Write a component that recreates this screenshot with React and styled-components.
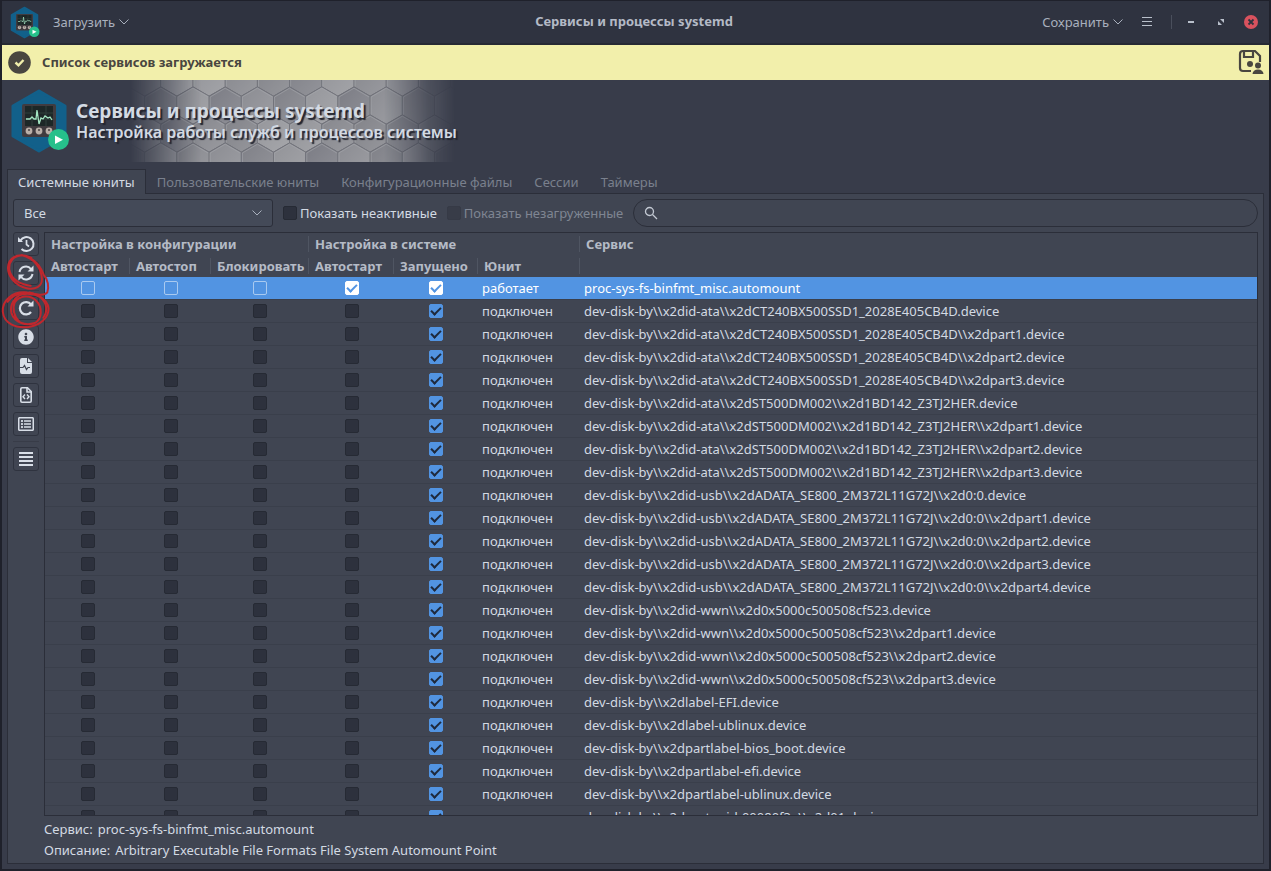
import React from 'react'
import styled, { createGlobalStyle } from 'styled-components'
import { FaInfoCircle, FaRegListAlt } from 'react-icons/fa'

const rows = [
  'dev-disk-by\\\\x2did-ata\\\\x2dCT240BX500SSD1_2028E405CB4D.device',
  'dev-disk-by\\\\x2did-ata\\\\x2dCT240BX500SSD1_2028E405CB4D\\\\x2dpart1.device',
  'dev-disk-by\\\\x2did-ata\\\\x2dCT240BX500SSD1_2028E405CB4D\\\\x2dpart2.device',
  'dev-disk-by\\\\x2did-ata\\\\x2dCT240BX500SSD1_2028E405CB4D\\\\x2dpart3.device',
  'dev-disk-by\\\\x2did-ata\\\\x2dST500DM002\\\\x2d1BD142_Z3TJ2HER.device',
  'dev-disk-by\\\\x2did-ata\\\\x2dST500DM002\\\\x2d1BD142_Z3TJ2HER\\\\x2dpart1.device',
  'dev-disk-by\\\\x2did-ata\\\\x2dST500DM002\\\\x2d1BD142_Z3TJ2HER\\\\x2dpart2.device',
  'dev-disk-by\\\\x2did-ata\\\\x2dST500DM002\\\\x2d1BD142_Z3TJ2HER\\\\x2dpart3.device',
  'dev-disk-by\\\\x2did-usb\\\\x2dADATA_SE800_2M372L11G72J\\\\x2d0:0.device',
  'dev-disk-by\\\\x2did-usb\\\\x2dADATA_SE800_2M372L11G72J\\\\x2d0:0\\\\x2dpart1.device',
  'dev-disk-by\\\\x2did-usb\\\\x2dADATA_SE800_2M372L11G72J\\\\x2d0:0\\\\x2dpart2.device',
  'dev-disk-by\\\\x2did-usb\\\\x2dADATA_SE800_2M372L11G72J\\\\x2d0:0\\\\x2dpart3.device',
  'dev-disk-by\\\\x2did-usb\\\\x2dADATA_SE800_2M372L11G72J\\\\x2d0:0\\\\x2dpart4.device',
  'dev-disk-by\\\\x2did-wwn\\\\x2d0x5000c500508cf523.device',
  'dev-disk-by\\\\x2did-wwn\\\\x2d0x5000c500508cf523\\\\x2dpart1.device',
  'dev-disk-by\\\\x2did-wwn\\\\x2d0x5000c500508cf523\\\\x2dpart2.device',
  'dev-disk-by\\\\x2did-wwn\\\\x2d0x5000c500508cf523\\\\x2dpart3.device',
  'dev-disk-by\\\\x2dlabel-EFI.device',
  'dev-disk-by\\\\x2dlabel-ublinux.device',
  'dev-disk-by\\\\x2dpartlabel-bios_boot.device',
  'dev-disk-by\\\\x2dpartlabel-efi.device',
  'dev-disk-by\\\\x2dpartlabel-ublinux.device',
  'dev-disk-by\\\\x2dpartuuid-00080f3a\\\\x2d01.device',
].map((name) => ({ name, state: 'подключен', checks: [false, false, false, false, true] }))

const services = [
  { name: 'proc-sys-fs-binfmt_misc.automount', state: 'работает', checks: [false, false, false, true, true], selected: true },
  ...rows,
]

const columns = ['Автостарт', 'Автостоп', 'Блокировать', 'Автостарт', 'Запущено']
const tabs = ['Системные юниты', 'Пользовательские юниты', 'Конфигурационные файлы', 'Сессии', 'Таймеры']

function Logo({ width, height }) {
  return (
    <svg width={width} height={height} viewBox="0 0 60 66" aria-hidden="true">
      <path d="M29 3 55 18V48L29 63 3 48V18Z" fill="#12608a" stroke="#12608a" strokeWidth="3" strokeLinejoin="round" />
      <rect x="12" y="16" width="34" height="33" rx="2" fill="#403b3f" />
      <rect x="15" y="18" width="28" height="20" fill="#1d2727" />
      <path d="M15 25H43M15 31H43M22 18V38M36 18V38" stroke="#30403c" strokeWidth="1" />
      <path d="M16 31H20L22 29 24 31H26L27 22 29 36 31 30 33 31 35 28 38 30 40 29 42 32" fill="none" stroke="#a5e8c4" strokeWidth="1.3" />
      <circle cx="19" cy="43" r="3.4" fill="#b9afa8" />
      <circle cx="29" cy="43" r="3.4" fill="#b9afa8" />
      <circle cx="39" cy="43" r="3.4" fill="#b9afa8" />
      <path d="M18 42h2M28 42h2M38 42h2" stroke="#4c4545" strokeWidth="1.4" />
      <circle cx="48.500" cy="51.500" r="10.500" fill="#26c08b" />
      <path d="M45 47.500 53 51.700 45 56Z" fill="#fff" />
    </svg>
  )
}

function Chevron() {
  return (
    <svg width="10" height="6" viewBox="0 0 10 6" fill="none" stroke="currentColor" aria-hidden="true">
      <path d="M.5.500 5 5 9.500.500" />
    </svg>
  )
}

function hexPoints(cx, cy) {
  return [[0, -18.6], [16.1, -9.3], [16.1, 9.3], [0, 18.6], [-16.1, 9.3], [-16.1, -9.3]]
    .map(([x, y]) => `${cx + x},${cy + y}`)
    .join(' ')
}

function Honeycomb() {
  const shades = ['#86878d', '#929398', '#7f8087', '#8b8c92', '#7b7c84', '#95969b', '#828389']
  const cells = []
  for (let r = 0; r < 4; r++) {
    for (let c = 0; c < 12; c++) {
      const cx = (r % 2 ? -1.4 : -17.5) + c * 32.2
      cells.push([cx, -2.5 + r * 28, shades[(r * 3 + c * 5 + (c % 3)) % 7]])
    }
  }
  return (
    <HoneycombSvg width="325" height="82" viewBox="0 0 325 82" aria-hidden="true">
      <defs>
        <linearGradient id="gloss" x1="0" y1="0" x2="1" y2="1">
          <stop offset="0" stopColor="#fff" stopOpacity="0" />
          <stop offset="1" stopColor="#fff" stopOpacity="0.16" />
        </linearGradient>
      </defs>
      {cells.map(([x, y, fill]) => (
        <g key={`${x}-${y}`}>
          <polygon points={hexPoints(x, y)} fill={fill} stroke="#6f7077" strokeWidth="0.8" />
          <polygon points={hexPoints(x, y)} fill="url(#gloss)" />
          <path d={`M${x - 15} ${y + 9}V${y - 8.5}L${x} ${y - 17.3}L${x + 15} ${y - 8.5}`} fill="none" stroke="#a5a6ab" strokeWidth="0.6" />
        </g>
      ))}
    </HoneycombSvg>
  )
}

function DoneIcon() {
  return (
    <svg width="23" height="23" viewBox="0 0 23 23" aria-hidden="true">
      <circle cx="11.500" cy="11.500" r="11.300" fill="#494640" />
      <path d="M7.500 11.500 10.500 14.300 15.500 9" fill="none" stroke="#f2efab" strokeWidth="2.400" />
    </svg>
  )
}

function SaveIcon() {
  return (
    <svg width="26" height="26" viewBox="0 0 26 26" fill="none" stroke="#494640" strokeWidth="2.200" aria-hidden="true">
      <path d="M13 22H5Q2 22 2 19V5Q2 2 5 2H17L22 7V13" />
      <path d="M6 2V8H15V2" />
      <circle cx="12" cy="15" r="3" fill="#494640" stroke="none" />
      <circle cx="20" cy="16.500" r="3" fill="#494640" stroke="none" />
      <path d="M14.500 25Q15 20.500 20 20.500T25.500 25Z" fill="#494640" stroke="none" />
    </svg>
  )
}

const HistoryIcon = () => (
  <svg width="18" height="18" viewBox="0 0 18 18" fill="none" stroke="currentColor" strokeWidth="2">
    <path d="M3.500 5.500A7 7 0 1 1 4.500 14" />
    <path d="M1 2V7H6Z" fill="currentColor" stroke="none" />
    <path d="M9.500 5V9.500L12 11.500" strokeWidth="1.700" />
  </svg>
)

const SyncIcon = () => (
  <svg width="18" height="18" viewBox="0 0 18 18" fill="none" stroke="currentColor" strokeWidth="2">
    <path d="M2.500 8A6.500 6.500 0 0 1 14 5" />
    <path d="M15.500 10A6.500 6.500 0 0 1 4 13" />
    <path d="M16.500 1.500V7.500H10.500ZM1.500 16.500V10.500H7.500Z" fill="currentColor" stroke="none" />
  </svg>
)

const RedoIcon = () => (
  <svg width="18" height="18" viewBox="0 0 18 18" fill="none" stroke="currentColor" strokeWidth="2.200">
    <path d="M14 5.500A6.200 6.200 0 1 0 14 13" />
    <path d="M16.500 1.500V7.500H10.500Z" fill="currentColor" stroke="none" />
  </svg>
)

const JournalIcon = () => (
  <svg width="18" height="18" viewBox="0 0 18 18">
    <path d="M3 3Q3 1 5 1H10V6H15V15Q15 17 13 17H5Q3 17 3 15ZM11 1 15 5H11Z" fill="currentColor" />
    <path d="M3 10.500H6L7.500 8.500 9.500 12.500 11 10.500H13" fill="none" stroke="#404552" strokeWidth="1.200" />
  </svg>
)

const CodeIcon = () => (
  <svg width="18" height="18" viewBox="0 0 18 18" fill="none" stroke="currentColor" strokeWidth="1.600">
    <path d="M3.800 3Q3.800 1.800 5 1.800H10.500L14.200 5.500V15Q14.200 16.200 13 16.200H5Q3.800 16.200 3.800 15Z" />
    <path d="M10 2V6H14" />
    <path d="M8 8.500 6 10.700 8 13M10 8.500 12 10.700 10 13" strokeWidth="1.400" />
  </svg>
)

const LinesIcon = () => (
  <svg width="18" height="18" viewBox="0 0 18 18" stroke="currentColor" strokeWidth="2">
    <path d="M2 3H16M2 7H16M2 11H16M2 15H16" />
  </svg>
)

const MenuIcon = () => (
  <svg width="12" height="12" viewBox="0 0 12 12" stroke="currentColor">
    <path d="M1 1.500H11M1 5.500H11M1 9.500H11" />
  </svg>
)

// freehand marks over the two refresh buttons
function Marks() {
  return (
    <MarksSvg width="60" height="83" viewBox="0 60 180 250" fill="none" stroke="#c1272d" strokeWidth="6" strokeLinecap="round" aria-hidden="true">
      <path d="M94 84C66 68 32 76 25 104C18 136 44 166 80 175C106 181 126 170 126 148C125 112 100 84 66 76C42 78 24 92 28 122C36 150 62 164 92 168" />
      <path d="M84 82C114 94 124 116 132 136C144 148 148 172 142 188C134 198 108 196 88 188" />
      <path d="M80 188C36 184 6 212 8 246C12 282 46 296 86 292C122 286 146 264 146 236C142 206 108 188 68 193C44 200 28 224 34 250C44 278 76 290 104 280C128 268 128 232 108 212C90 194 58 196 44 218C36 236 42 262 58 276" />
      <path d="M22 216C44 186 92 180 122 202C144 222 142 248 130 264" />
    </MarksSvg>
  )
}

const tools = [
  { label: 'История', icon: <HistoryIcon /> },
  { label: 'Обновить', icon: <SyncIcon /> },
  { separator: true },
  { label: 'Перезапустить', icon: <RedoIcon /> },
  { label: 'Сведения', icon: <FaInfoCircle size={16} /> },
  { label: 'Журнал', icon: <JournalIcon /> },
  { label: 'Файл', icon: <CodeIcon /> },
  { label: 'Список', icon: <FaRegListAlt size={16} /> },
  { separator: true },
  { label: 'Строки', icon: <LinesIcon /> },
]

export default function App() {
  return (
    <>
      <GlobalStyle />
      <Window>
        <TitleBar>
          <TitleGroup>
            <Logo width={30} height={33} />
            <MenuButton>Загрузить<Chevron /></MenuButton>
          </TitleGroup>
          <WindowTitle>Сервисы и процессы systemd</WindowTitle>
          <TitleGroup $end>
            <MenuButton>Сохранить<Chevron /></MenuButton>
            <IconButton aria-label="Меню"><MenuIcon /></IconButton>
            <Divider />
            <WindowButtons>
              <IconButton aria-label="Свернуть">
                <svg width="14" height="14" viewBox="0 0 14 14"><path d="M4 7H10" stroke="currentColor" strokeWidth="2" /></svg>
              </IconButton>
              <IconButton aria-label="Восстановить">
                <svg width="14" height="14" viewBox="0 0 14 14" fill="currentColor"><path d="M6 4H10V8ZM4 6V10H8Z" /></svg>
              </IconButton>
              <IconButton aria-label="Закрыть">
                <svg width="14" height="14" viewBox="0 0 14 14">
                  <circle cx="7" cy="7" r="7" fill="#d9525e" />
                  <path d="M4.500 4.500 9.500 9.500M9.500 4.500 4.500 9.500" stroke="#2f343f" strokeWidth="1.800" />
                </svg>
              </IconButton>
            </WindowButtons>
          </TitleGroup>
        </TitleBar>

        <Notice>
          <DoneIcon />
          <span>Список сервисов загружается</span>
          <NoticeButton aria-label="Сохранить для пользователя"><SaveIcon /></NoticeButton>
        </Notice>

        <Banner>
          <Honeycomb />
          <BannerContent>
            <Logo width={60} height={66} />
            <div>
              <h1>Сервисы и процессы systemd</h1>
              <h2>Настройка работы служб и процессов системы</h2>
            </div>
          </BannerContent>
        </Banner>

        <Tabs role="tablist">
          {tabs.map((tab, i) => (
            <Tab key={tab} role="tab" aria-selected={i === 0} $active={i === 0}>{tab}</Tab>
          ))}
        </Tabs>

        <Panel>
          <Filters>
            <SelectBox>
              <select aria-label="Тип юнита" defaultValue="all">
                <option value="all">Все</option>
              </select>
              <Chevron />
            </SelectBox>
            <CheckLabel>
              <Check type="checkbox" />Показать неактивные
            </CheckLabel>
            <CheckLabel $disabled>
              <Check type="checkbox" disabled />Показать незагруженные
            </CheckLabel>
            <Search>
              <svg width="14" height="14" viewBox="0 0 14 14" fill="none" stroke="currentColor" strokeWidth="1.300">
                <circle cx="5.500" cy="5.500" r="4" />
                <path d="M8.500 8.500 13 13" />
              </svg>
              <input type="search" aria-label="Поиск" />
            </Search>
          </Filters>

          <Content>
            <Toolbar>
              {tools.map((tool, i) => (tool.separator
                ? <Separator key={i} />
                : <ToolButton key={i} aria-label={tool.label}>{tool.icon}</ToolButton>
              ))}
              <Marks />
            </Toolbar>
            <TableBox>
              <Table>
                <colgroup>
                  <Col $width={85} />
                  <Col $width={81} />
                  <Col $width={98} />
                  <Col $width={85} />
                  <Col $width={84} />
                  <Col $width={102} />
                  <col />
                </colgroup>
                <thead>
                  <tr>
                    <HeadCell colSpan={3} $line>Настройка в конфигурации</HeadCell>
                    <HeadCell colSpan={3} $line>Настройка в системе</HeadCell>
                    <HeadCell>Сервис</HeadCell>
                  </tr>
                  <tr>
                    {columns.map((name, i) => <HeadCell key={i} $line>{name}</HeadCell>)}
                    <HeadCell $line>Юнит</HeadCell>
                    <HeadCell as="td" />
                  </tr>
                </thead>
                <tbody>
                  {services.map((service) => (
                    <Row key={service.name} $selected={service.selected}>
                      {service.checks.map((on, i) => (
                        <Cell key={i} $center>
                          <Check
                            type="checkbox"
                            defaultChecked={on}
                            $selected={service.selected}
                            aria-label={`${columns[i]} ${service.name}`}
                          />
                        </Cell>
                      ))}
                      <Cell>{service.state}</Cell>
                      <Cell>{service.name}</Cell>
                    </Row>
                  ))}
                </tbody>
              </Table>
            </TableBox>
          </Content>

          <Details>
            <dt>Сервис:</dt>
            <dd>proc-sys-fs-binfmt_misc.automount</dd>
          </Details>
          <Details>
            <dt>Описание:</dt>
            <dd>Arbitrary Executable File Formats File System Automount Point</dd>
          </Details>
        </Panel>
      </Window>
    </>
  )
}

const GlobalStyle = createGlobalStyle`
  * {
    box-sizing: border-box;
  }
  body {
    margin: 0;
    background: #1b1c24;
    color: #d3dae3;
    font-family: "Noto Sans", sans-serif;
    font-size: 13px;
  }
  button, input, select {
    font: inherit;
    color: inherit;
  }
  button {
    padding: 0;
    border: 0;
    background: none;
  }
  svg {
    flex: none;
  }
`

const Window = styled.div`
  display: flex;
  flex-direction: column;
  height: 100vh;
  background: #383c4a;
  border: 2px solid #1f212b;
  border-top-width: 1px;
`

const TitleBar = styled.header`
  display: grid;
  grid-template-columns: 1fr auto 1fr;
  align-items: center;
  flex: none;
  height: 44px;
  padding: 0 11px 0 8px;
  background: #2f3340;
  border-bottom: 2px solid #272a34;
  color: #a9b0bd;
`

const TitleGroup = styled.div`
  display: flex;
  align-items: center;
  justify-content: ${({ $end }) => ($end ? 'flex-end' : 'flex-start')};
  gap: ${({ $end }) => ($end ? '18px' : '13px')};
`

const WindowButtons = styled.div`
  display: flex;
  gap: 16px;
  margin-left: -6px;
`

const WindowTitle = styled.strong`
  padding-bottom: 2px;
  color: #b4bac6;
`

const MenuButton = styled.button`
  display: flex;
  align-items: center;
  gap: 4px;
`

const IconButton = styled.button`
  display: flex;
  color: #b9c0cb;
`

const Divider = styled.span`
  width: 1px;
  height: 14px;
  background: #4a4f5c;
`

const Notice = styled.div`
  display: flex;
  align-items: center;
  flex: none;
  gap: 11px;
  height: 35px;
  padding: 0 5px 1px 6px;
  background: #f2efab;
  color: #494640;
  font-weight: 700;
`

const NoticeButton = styled.button`
  display: flex;
  margin-left: auto;
`

const Banner = styled.div`
  display: grid;
  flex: none;
  height: 82px;
  > * {
    grid-area: 1 / 1;
  }
`

const HoneycombSvg = styled.svg`
  margin-left: 128px;
  mask-image: linear-gradient(90deg, transparent, #000 22%, #000 78%, rgba(0, 0, 0, 0.25) 92%, transparent);
`

const BannerContent = styled.div`
  display: flex;
  align-items: center;
  gap: 6px;
  padding-left: 8px;
  z-index: 1;
  text-shadow: 2px 2px 1px #23252f;
  h1, h2 {
    margin: 0;
    font-weight: 700;
    white-space: nowrap;
  }
  h1 {
    font-size: 19px;
    line-height: 22px;
  }
  h2 {
    font-size: 16px;
    font-weight: 600;
    line-height: 20px;
  }
`

const Tabs = styled.div`
  display: flex;
  flex: none;
  margin: 7px 5px 0;
`

const Tab = styled.button`
  height: 25px;
  margin-bottom: -1px;
  padding: 0 10px;
  border: 1px solid transparent;
  border-bottom: 0;
  color: #7a808d;
  ${({ $active }) => $active && `
    position: relative;
    background: #404552;
    border-color: #2b2e39;
    color: #d3dae3;
  `}
`

const Panel = styled.main`
  display: flex;
  flex-direction: column;
  flex: 1;
  min-height: 0;
  margin: 0 5px 5px;
  padding: 5px 5px 2px;
  background: #404552;
  border: 1px solid #2b2e39;
`

const Filters = styled.div`
  display: flex;
  align-items: center;
  gap: 10px;
  height: 28px;
`

const SelectBox = styled.div`
  position: relative;
  width: 260px;
  height: 28px;
  color: #d3dae3;
  select {
    appearance: none;
    width: 100%;
    height: 100%;
    padding: 0 10px;
    background: #444a58;
    border: 1px solid #2b2e39;
    border-radius: 3px;
  }
  svg {
    position: absolute;
    right: 11px;
    top: 11px;
    color: #a9b0bd;
    pointer-events: none;
  }
`

const CheckLabel = styled.label`
  display: flex;
  align-items: center;
  gap: 3px;
  white-space: nowrap;
  color: ${({ $disabled }) => ($disabled ? '#7f8592' : '#d3dae3')};
`

const Check = styled.input`
  appearance: none;
  display: grid;
  place-items: center;
  width: 14px;
  height: 14px;
  margin: 0;
  background: ${({ $selected }) => ($selected ? 'transparent' : '#2d313d')};
  border: 1px solid ${({ $selected }) => ($selected ? '#a9caf0' : '#262a34')};
  border-radius: 2px;
  &:disabled {
    background: #383c48;
    border-color: #363a46;
  }
  &:checked {
    background: ${({ $selected }) => ($selected ? '#fff' : '#5294e2')};
    border-color: ${({ $selected }) => ($selected ? '#fff' : '#5294e2')};
  }
  &:checked::after {
    content: '';
    width: 8px;
    height: 4px;
    margin-bottom: 2px;
    border: solid ${({ $selected }) => ($selected ? '#5294e2' : '#1f2a3d')};
    border-width: 0 0 2px 2px;
    transform: rotate(-45deg);
  }
`

const Search = styled.label`
  display: flex;
  align-items: center;
  flex: 1;
  gap: 8px;
  height: 28px;
  padding: 0 10px;
  border: 1px solid #2b2e39;
  border-radius: 14px;
  color: #c3c9d3;
  input {
    flex: 1;
    min-width: 0;
    padding: 0;
    border: 0;
    outline: 0;
    background: none;
  }
`

const Content = styled.div`
  display: flex;
  flex: 1;
  gap: 5px;
  min-height: 0;
  margin: 5px 0 3px;
`

const Toolbar = styled.div`
  position: relative;
  display: flex;
  flex-direction: column;
  gap: 5px;
  width: 26px;
`

const ToolButton = styled.button`
  display: flex;
  align-items: center;
  justify-content: center;
  height: 24px;
  border: 1px solid #2f333f;
  border-radius: 3px;
  color: #d8dee7;
`

const Separator = styled.span`
  height: 1px;
  background: #383c48;
`

const MarksSvg = styled.svg`
  position: absolute;
  left: -13px;
  top: 18px;
  pointer-events: none;
`

const TableBox = styled.div`
  flex: 1;
  min-width: 0;
  overflow: hidden;
  border: 1px solid #2b2e39;
`

const Table = styled.table`
  width: 100%;
  table-layout: fixed;
  border-spacing: 0;
`

const Col = styled.col`
  width: ${({ $width }) => $width}px;
`

const HeadCell = styled.th`
  height: 22px;
  padding: 0 0 0 6px;
  line-height: 22px;
  text-align: left;
  white-space: nowrap;
  color: #b5bbc6;
  ${({ $line }) => $line && `
    background: linear-gradient(#4f5562, #4f5562) right center / 1px 16px no-repeat;
  `}
`

const Cell = styled.td`
  height: 23px;
  padding: 0 4px;
  line-height: 22px;
  white-space: nowrap;
  border-bottom: 1px solid #3a3f4b;
  ${({ $center }) => $center && `
    ${Check} {
      margin: 0 auto;
    }
  `}
`

const Row = styled.tr`
  ${({ $selected }) => $selected && `
    background: #5294e2;
    color: #fff;
  `}
`

const Details = styled.dl`
  display: flex;
  gap: 5px;
  margin: 0 0 0 31px;
  line-height: 21px;
  dd {
    margin: 0;
  }
`
